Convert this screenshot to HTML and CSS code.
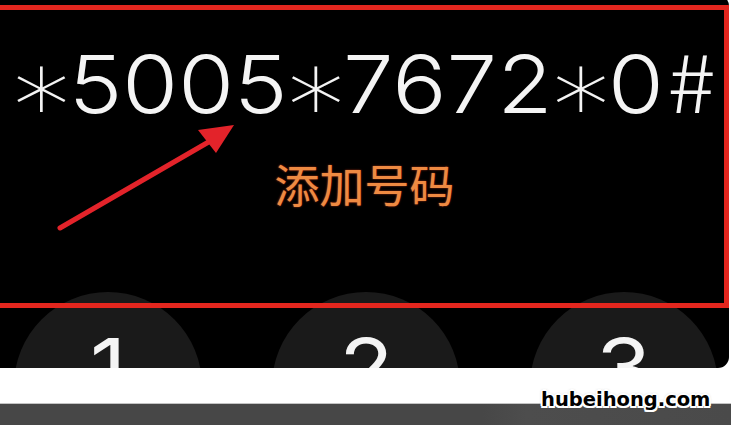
FILE: index.html
```html
<!DOCTYPE html>
<html lang="zh">
<head>
<meta charset="utf-8">
<title>拨号</title>
<link rel="stylesheet" href="styles.css">
</head>
<body>
<div class="phone">
  <div class="number"><span class="ast">*</span>5005<span class="ast">*</span>7672<span class="ast">*</span>0<span class="hash">#</span></div>
  <div class="add">添加号码</div>
  <div class="keys">
    <div class="key"><span class="digit">1</span></div>
    <div class="key"><span class="digit">2</span></div>
    <div class="key"><span class="digit">3</span></div>
  </div>
  <div class="frame"></div>
  <svg class="arrow" viewBox="0 0 729 368" width="729" height="368">
    <line x1="60" y1="228" x2="212" y2="140" stroke="#e3232a" stroke-width="5" stroke-linecap="round"/>
    <polygon points="234,125 198,130 216,153" fill="#e3232a"/>
  </svg>
</div>
<div class="gap"></div>
<div class="bar"></div>
<div class="watermark">hubeihong.com</div>
</body>
</html>
```
FILE: styles.css
```css
html, body {
  margin: 0;
  padding: 0;
  background: #ffffff;
  width: 731px;
  height: 425px;
  overflow: hidden;
}
.phone {
  position: relative;
  margin-top: -5px;
  width: 729px;
  height: 373px;
  background: #000000;
  border-radius: 0 11px 11px 0;
  overflow: hidden;
}
.number {
  padding-top: 43px;
  height: 80px;
  line-height: 80px;
  font-family: Inter, "Liberation Sans", sans-serif;
  font-weight: 300;
  font-size: 80px;
  letter-spacing: 0;
  color: #f4f4f4;
  text-align: center;
  white-space: nowrap;
  transform: scaleX(1.13);
}
.ast {
  display: inline-block;
  width: 49px;
  text-align: center;
  font-family: "DejaVu Sans", sans-serif;
  font-size: 100px;
  line-height: 80px;
  vertical-align: -28px;
}
.hash {
  margin-left: 3px;
  font-family: "Noto Sans CJK SC", sans-serif;
  font-weight: 300;
}
.add {
  margin-top: 43px;
  height: 45px;
  line-height: 45px;
  font-family: "Noto Sans CJK SC", sans-serif;
  font-size: 45px;
  color: #ee8a42;
  text-align: center;
  text-shadow: 0 0 2px rgba(220, 70, 30, 0.8);
}
.keys {
  margin-top: 86px;
  padding-left: 14px;
  display: flex;
  gap: 70px;
}
.key {
  width: 188px;
  height: 188px;
  flex: none;
  border-radius: 50%;
  background: #1a1a1a;
  box-sizing: border-box;
  padding-top: 35px;
  line-height: 80px;
  font-family: Inter, "Liberation Sans", sans-serif;
  font-size: 80px;
  font-weight: 400;
  color: #f4f4f4;
  text-align: center;
}
.digit {
  display: inline-block;
  transform: scaleX(1.12);
}
.frame {
  position: absolute;
  top: 10px;
  left: -10px;
  right: 0;
  height: 303px;
  box-sizing: border-box;
  border: 5px solid #e3261e;
}
.arrow {
  position: absolute;
  top: 5px;
  left: 0;
}
.gap {
  height: 35px;
}
.bar {
  height: 21px;
  border-top: 1px solid #c4c4c4;
  background: linear-gradient(90deg, #474747 0%, #474747 66%, #4d4d4d 72%, #4a4a4a 100%);
}
.watermark {
  position: absolute;
  left: 541px;
  top: 389px;
  font-family: "DejaVu Sans", sans-serif;
  font-weight: bold;
  font-size: 19.5px;
  line-height: 22px;
  color: #000000;
  text-shadow:
    2px 0 0 #fff, -2px 0 0 #fff, 0 2px 0 #fff, 0 -2px 0 #fff,
    1.5px 1.5px 0 #fff, -1.5px -1.5px 0 #fff, 1.5px -1.5px 0 #fff, -1.5px 1.5px 0 #fff,
    0 0 3px rgba(0,0,0,0.7);
}
```
